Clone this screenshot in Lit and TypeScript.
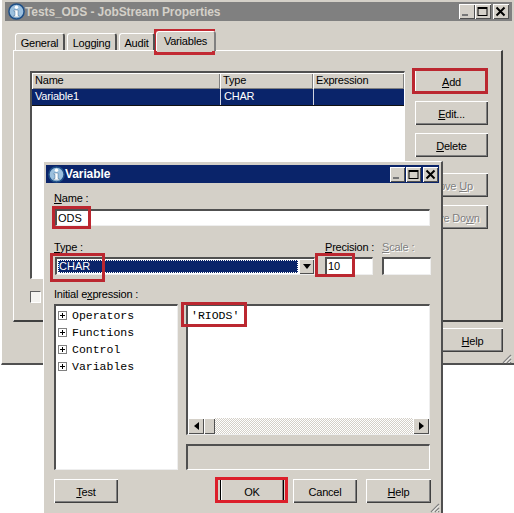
import { LitElement, html, css, svg } from "lit";
import { customElement } from "lit/decorators.js";

const infoIcon = () => html`<svg class="ico" viewBox="0 0 17 17">
  <circle cx="8.5" cy="8.5" r="7.6" fill="#9cc0de" stroke="#1f4f86" stroke-width="1.5"/>
  <circle cx="8.5" cy="4.3" r="1.7" fill="#fff"/>
  <path d="M6 7h4v5.5h1.2V14H5.8v-1.5H7V8.4H6z" fill="#fff" stroke="#24507f" stroke-width=".4"/>
</svg>`;

const controls = () => html`<div class="ctrls">
  <span class="ctl"><svg viewBox="0 0 15 15"><rect x="3" y="10" width="6" height="2" fill="#777"/></svg></span>
  <span class="ctl"><svg viewBox="0 0 15 15"><path d="M2.5 3h10v9h-10z M3.5 5v6h8V5z" fill="#000" fill-rule="evenodd"/></svg></span>
  <span class="ctl gapl"><svg viewBox="0 0 15 15"><path d="M3.5 3.5l8 8M11.5 3.5l-8 8" stroke="#000" stroke-width="2"/></svg></span>
</div>`;

const grip = () => svg`<svg class="grip" viewBox="0 0 11 11">
  <path d="M10 2L2 10M10 6L6 10M10 9L9 10" stroke="#808080" stroke-width="1.3"/>
  <path d="M10 3.5L3.5 10M10 7.5L7.5 10" stroke="#fff" stroke-width="1"/>
</svg>`;

const marks: [number, number, number, number, string][] = [
  [154, 29, 61, 26, "#c22a33"],
  [412, 68, 76, 26, "#bb2730"],
  [52, 206, 39, 23, "#bb2730"],
  [50, 253, 55, 29, "#bb2730"],
  [315, 253, 40, 24, "#bb2730"],
  [181, 302, 66, 25, "#bb2730"],
  [215, 477, 73, 26, "#dc1f2b"],
];

@customElement("app-root")
export class AppRoot extends LitElement {
  static styles = css`
    :host {
      display: block;
      position: relative;
      width: 514px;
      height: 513px;
      overflow: hidden;
      background: #fff;
      font: 11px "Liberation Sans", Arial, sans-serif;
      letter-spacing: -0.2px;
      color: #000;
    }
    * { box-sizing: border-box; }
    u { text-decoration: underline; }
    .win {
      margin-left: 1px;
      width: 513px;
      height: 365px;
      padding-top: 2px;
      background: #d4d0c8;
      border-left: 1px solid #fff;
      border-bottom: 2px solid #505050;
    }
    .title {
      display: flex;
      align-items: center;
      height: 19px;
      margin: 0 2px 0 3px;
      padding: 0 3px;
      gap: 0;
      background: #808080;
      color: #d4d0c8;
      font: bold 12px "Liberation Sans", sans-serif;
      letter-spacing: -0.1px;
      white-space: nowrap;
    }
    .ico { width: 17px; height: 17px; flex: none; }
    .ctrls { display: flex; margin-left: auto; }
    .ctl {
      display: block;
      width: 16px;
      height: 15px;
      background: #d4d0c8;
      box-shadow: inset 1px 1px #fff, inset -1px -1px #505050;
    }
    .gapl { margin-left: 2px; }
    .ctl svg { width: 15px; height: 15px; display: block; }
    .body { margin: 10px 0 0 11px; width: 490px; }
    .tabs { display: flex; align-items: flex-end; height: 19px; padding-left: 2px; gap: 2px; position: relative; z-index: 1; }
    .tab {
      width: 50px;
      height: 17px;
      display: flex;
      align-items: center;
      justify-content: center;
      border-top: 1px solid #fff;
      border-left: 1px solid #fff;
      border-right: 2px solid #505050;
      border-radius: 3px 3px 0 0;
      padding-top: 1px;
    }
    .tab.audit { width: 36px; }
    .tab.sel {
      width: 60px;
      height: 20px;
      margin-bottom: -1px;
      margin-left: -1px;
      border-right-color: #808080;
      background: #d4d0c8;
      padding-bottom: 2px;
    }
    .panel {
      height: 272px;
      border-top: 1px solid #fff;
      border-left: 1px solid #fff;
      border-right: 2px solid #404040;
      border-bottom: 2px solid #404040;
      padding: 20px 0 0 16px;
    }
    .panel-grid { display: grid; grid-template-columns: 375px 73px; column-gap: 10px; }
    .list {
      height: 208px;
      background: #fff;
      border-top: 2px solid #505050;
      border-left: 2px solid #505050;
      border-right: 1px solid #fff;
      border-bottom: 1px solid #fff;
    }
    .row { display: grid; grid-template-columns: 188px 93px 1fr; }
    .row span { padding-left: 3px; height: 16px; line-height: 15px; }
    .head span {
      background: #d4d0c8;
      box-shadow: inset 1px 1px #fff, inset -1px -1px #808080;
    }
    .item { background: #0a246a; color: #fff; border-bottom: 1px solid #111; height: 17px; }
    .item span + span { border-left: 1px solid #cfd3e0; }
    .side { display: flex; flex-direction: column; gap: 8px; margin-top: -2px; }
    .btn {
      display: flex;
      align-items: center;
      justify-content: center;
      height: 24px;
      background: #d4d0c8;
      box-shadow: inset 1px 1px #fff, inset -1px -1px #404040, inset -2px -2px #808080;
      padding-top: 1px;
    }
    .btn.off { color: #808080; text-shadow: 1px 1px #fff; }
    .mt { margin-top: 8px; }
    .check {
      display: block;
      width: 11px;
      height: 12px;
      margin-top: 12px;
      background: #f4f3f0;
      border-top: 1px solid #606060;
      border-left: 1px solid #606060;
      border-right: 1px solid #fff;
      border-bottom: 1px solid #fff;
    }
    .foot { display: flex; justify-content: flex-end; margin-top: 6px; }
    .foot .btn { width: 61px; }
    .grip { position: absolute; width: 11px; height: 11px; right: 2px; top: 353px; }
    .dlg {
      position: absolute;
      left: 43px;
      top: 161px;
      width: 400px;
      height: 352px;
      background: #d4d0c8;
      border-top: 1px solid #fff;
      border-left: 1px solid #fff;
      border-right: 2px solid #505050;
      padding-top: 3px;
    }
    .dlg .title { margin: 0 2px; padding: 0 1px 0 2px; height: 18px; background: #0a246a; color: #fff; }
    .dlg .ctl { width: 15px; }
    .dlg .ctl + .ctl { margin-left: 1px; }
    .dlg .ctl.gapl { margin-left: 2px; }
    .dlg .grip { right: 1px; top: 340px; }
    .form { padding: 8px 0 0 11px; width: 386px; }
    .lbl { display: block; height: 14px; line-height: 14px; margin-left: -1px; white-space: nowrap; }
    .lbl.off { color: #808080; text-shadow: 1px 1px #fff; }
    .field {
      display: block;
      background: #fff;
      border-top: 2px solid #505050;
      border-left: 2px solid #505050;
      border-right: 1px solid #eee;
      border-bottom: 1px solid #eee;
      padding-left: 1px;
      white-space: nowrap;
      letter-spacing: 0;
    }
    .name { height: 17px; line-height: 14px; margin-top: 4px; }
    .types {
      display: grid;
      grid-template-columns: 260px 48px 48px;
      column-gap: 10px;
      margin-top: 14px;
    }
    .cell .field { margin-top: 3px; height: 18px; line-height: 15px; }
    .cell.sc { margin-left: -1px; }
    .cell .lbl { margin-left: 0; }
    .cell .combo {
      display: flex;
      align-items: stretch;
      padding: 0;
    }
    .combo .val {
      flex: 1;
      margin: 1px;
      padding-left: 1px;
      background: #0a246a;
      color: #fff;
      outline: 1px dotted #fff;
      outline-offset: -1px;
      line-height: 13px;
    }
    .arrow {
      width: 15px;
      background: #d4d0c8;
      box-shadow: inset 1px 1px #fff, inset -1px -1px #505050;
      display: flex;
      align-items: center;
      justify-content: center;
    }
    .arrow svg { width: 8px; height: 5px; }
    .cell .lbl.tight { margin-left: -1px; }
    .expr-lbl { margin-top: 12px; }
    .editor { display: grid; grid-template-columns: 124px 244px; column-gap: 8px; margin: 3px 0 0 -1px; }
    .tree {
      height: 166px;
      background: #fff;
      border-top: 2px solid #505050;
      border-left: 2px solid #505050;
      border-right: 1px solid #eee;
      border-bottom: 1px solid #eee;
      padding: 1px 0 0 2px;
      font: 11.5px "Liberation Mono", monospace;
      letter-spacing: 0;
    }
    .node { display: flex; align-items: center; height: 17px; gap: 5px; }
    .plus {
      width: 9px;
      height: 9px;
      border: 1px solid #808080;
      background:
        linear-gradient(#000, #000) center / 5px 1px no-repeat,
        linear-gradient(#000, #000) center / 1px 5px no-repeat;
    }
    .right { display: flex; flex-direction: column; gap: 9px; }
    .code {
      height: 131px;
      display: flex;
      flex-direction: column;
      background: #fff;
      border-top: 2px solid #505050;
      border-left: 2px solid #505050;
      border-right: 1px solid #eee;
      border-bottom: 1px solid #eee;
      font: 11.5px "Liberation Mono", monospace;
      letter-spacing: 0;
    }
    .code-text { flex: 1; padding: 3px 0 0 3px; }
    .sbar {
      display: flex;
      height: 16px;
      background: repeating-conic-gradient(#d4d0c8 0 25%, #fff 0 50%) 0 0 / 2px 2px;
    }
    .sb {
      width: 16px;
      background: #d4d0c8;
      box-shadow: inset 1px 1px #fff, inset -1px -1px #505050;
      display: flex;
      align-items: center;
      justify-content: center;
    }
    .sb.th { width: 11px; }
    .sb svg { width: 5px; height: 8px; }
    .sbar .end { margin-left: auto; }
    .status {
      height: 26px;
      border-top: 2px solid #505050;
      border-left: 2px solid #505050;
      border-right: 1px solid #fff;
      border-bottom: 1px solid #fff;
    }
    .actions { display: flex; gap: 9px; margin: 9px 0 0 -1px; }
    .actions .btn { width: 64px; flex: none; }
    .actions .ok {
      margin-left: 93px;
      box-shadow: inset 1px 0 #000, inset 2px 1px #fff, inset -1px -1px #000, inset -2px -2px #808080;
    }
    .actions .help { width: 65px; }
    .mark { position: absolute; border: 3px solid #bb2730; pointer-events: none; }
  `;

  render() {
    return html`
      <div class="win">
        <div class="title">${infoIcon()}<span>Tests_ODS - JobStream Properties</span>${controls()}</div>
        <div class="body">
          <div class="tabs">
            <div class="tab">General</div>
            <div class="tab">Logging</div>
            <div class="tab audit">Audit</div>
            <div class="tab sel">Variables</div>
          </div>
          <div class="panel">
            <div class="panel-grid">
              <div class="list">
                <div class="row head"><span>Name</span><span>Type</span><span>Expression</span></div>
                <div class="row item"><span>Variable1</span><span>CHAR</span><span></span></div>
              </div>
              <div class="side">
                <div class="btn"><span><u>A</u>dd</span></div>
                <div class="btn"><span><u>E</u>dit...</span></div>
                <div class="btn"><span><u>D</u>elete</span></div>
                <div class="btn off mt"><span>Move <u>U</u>p</span></div>
                <div class="btn off"><span>Move Do<u>w</u>n</span></div>
              </div>
            </div>
            <span class="check"></span>
          </div>
          <div class="foot"><div class="btn"><span><u>H</u>elp</span></div></div>
        </div>
        ${grip()}
      </div>

      <div class="dlg">
        <div class="title">${infoIcon()}<span>Variable</span>${controls()}</div>
        <div class="form">
          <label class="lbl"><u>N</u>ame :</label>
          <div class="field name">ODS</div>
          <div class="types">
            <div class="cell">
              <label class="lbl tight"><u>T</u>ype :</label>
              <div class="field combo">
                <div class="val">CHAR</div>
                <div class="arrow"><svg viewBox="0 0 8 5"><path d="M0 0h8L4 5z" fill="#000"/></svg></div>
              </div>
            </div>
            <div class="cell">
              <label class="lbl"><u>P</u>recision :</label>
              <div class="field">10</div>
            </div>
            <div class="cell sc">
              <label class="lbl off"><u>S</u>cale :</label>
              <div class="field"></div>
            </div>
          </div>
          <label class="lbl expr-lbl">Initial e<u>x</u>pression :</label>
          <div class="editor">
            <div class="tree">
              ${["Operators", "Functions", "Control", "Variables"].map(
                (n) => html`<div class="node"><span class="plus"></span><span>${n}</span></div>`
              )}
            </div>
            <div class="right">
              <div class="code">
                <div class="code-text">'RIODS'</div>
                <div class="sbar">
                  <div class="sb"><svg viewBox="0 0 5 8"><path d="M5 0v8L0 4z" fill="#000"/></svg></div>
                  <div class="sb th"></div>
                  <div class="sb end"><svg viewBox="0 0 5 8"><path d="M0 0v8l5-4z" fill="#000"/></svg></div>
                </div>
              </div>
              <div class="status"></div>
            </div>
          </div>
          <div class="actions">
            <div class="btn"><span><u>T</u>est</span></div>
            <div class="btn ok"><span>OK</span></div>
            <div class="btn"><span>Cancel</span></div>
            <div class="btn help"><span><u>H</u>elp</span></div>
          </div>
        </div>
        ${grip()}
      </div>

      ${marks.map(
        ([x, y, w, h, c]) =>
          html`<div class="mark" style="left:${x}px;top:${y}px;width:${w}px;height:${h}px;border-color:${c}"></div>`
      )}
    `;
  }
}
